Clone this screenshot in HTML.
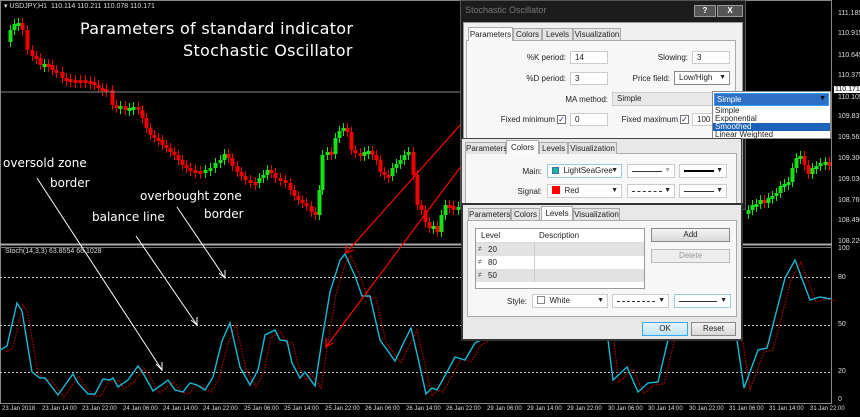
<!DOCTYPE html>
<html><head><meta charset="utf-8"><style>
*{margin:0;padding:0;box-sizing:border-box}
body{width:860px;height:417px;background:#000;position:relative;overflow:hidden;font-family:"Liberation Sans",sans-serif}
.a{position:absolute}
.ax{position:absolute;left:838px;font-size:7px;color:#ddd}
.tl{position:absolute;top:406px;font-size:6px;color:#ddd;white-space:nowrap}
.dlg{position:absolute;background:#1c1c1c;border:1px solid #555}
.body{position:absolute;background:#f0f0f0;border:1px solid #999}
.tab{position:absolute;font-size:8px;color:#222;background:#e4e4e4;border:1px solid #aaa;border-bottom:none;text-align:center;line-height:11px;height:12px}
.tab.s{background:#fafafa;height:14px;line-height:13px;z-index:2}
.pan{position:absolute;border:1px solid #aaa;background:#f7f7f7}
.lb{position:absolute;font-size:8px;color:#222;text-align:right;white-space:nowrap}
.in{position:absolute;background:#fff;border:1px solid #ccc;font-size:8px;color:#222;padding-left:4px;line-height:11px;white-space:nowrap;overflow:hidden}
.ar{position:absolute;right:3px;top:0;font-size:7px}
.btn{position:absolute;background:linear-gradient(#f4f4f4,#d8d8d8);border:1px solid #888;font-size:8px;text-align:center;line-height:12px;color:#222}
.cb{position:absolute;width:9px;height:9px;border:1px solid #777;background:#fff;font-size:8px;line-height:8px;text-align:center;color:#225}
.hand{position:absolute;color:#fff;font-family:"DejaVu Sans","Liberation Sans",sans-serif;white-space:nowrap}
</style></head><body>
<svg class="a" style="left:0;top:0" width="860" height="417">
<g id="candles"></g>
<line x1="0" y1="92" x2="832" y2="92" stroke="#888" stroke-width="1"/>
<rect x="0.5" y="0.5" width="831" height="403" fill="none" stroke="#888"/>
<line x1="0" y1="244.5" x2="832" y2="244.5" stroke="#aaa" stroke-width="2"/>
<line x1="0" y1="247.5" x2="832" y2="247.5" stroke="#777"/>
<g stroke="#ccc" stroke-dasharray="2,2" stroke-width="1">
<line x1="0" y1="277.5" x2="832" y2="277.5"/><line x1="0" y1="325.5" x2="832" y2="325.5"/><line x1="0" y1="372.5" x2="832" y2="372.5"/></g>
<path id="red" fill="none" stroke="#b00000" stroke-width="1.3" stroke-dasharray="1.5,1.5" transform="translate(6,2)"/>
<path id="blue" fill="none" stroke="#1ab8d8" stroke-width="1.4"/>
<g stroke="#fff" stroke-width="1">
<line x1="37" y1="178" x2="162" y2="370"/><path d="M156 364 L162 370 L162 362" fill="none"/>
<line x1="136" y1="236" x2="197" y2="325"/><path d="M191 320 L197 325 L197 317" fill="none"/>
<line x1="177" y1="207" x2="225" y2="278"/><path d="M219 273 L225 278 L225 270" fill="none"/>
</g>
<g stroke="#f00" stroke-width="1.2">
<line x1="520" y1="58" x2="346" y2="253"/><path d="M346 245 L346 253 L354 250" fill="none"/>
<line x1="527" y1="78" x2="326" y2="347"/><path d="M326 338 L326 347 L333 343" fill="none"/>
</g>
</svg>
<div class="a" style="left:4px;top:2px;font-size:7px;color:#ddd">▾ USDJPY,H1 &nbsp;110.114 110.211 110.078 110.171</div>
<div class="a" style="left:5px;top:248px;font-size:7px;color:#ddd">Stoch(14,3,3) 63.8554 66.1028</div>
<div class="hand" style="left:80px;top:19px;font-size:16px;letter-spacing:0.3px">Parameters of standard indicator</div>
<div class="hand" style="left:183px;top:41px;font-size:16px;letter-spacing:0.3px">Stochastic Oscillator</div>
<div class="hand" style="left:3px;top:156px;font-size:12px">oversold zone</div>
<div class="hand" style="left:50px;top:176px;font-size:12px">border</div>
<div class="hand" style="left:140px;top:189px;font-size:12px">overbought zone</div>
<div class="hand" style="left:204px;top:207px;font-size:12px">border</div>
<div class="hand" style="left:92px;top:210px;font-size:12px">balance line</div>
<div class="ax" style="top:10px">111.185</div><div class="ax" style="top:30px">110.915</div><div class="ax" style="top:52px">110.645</div><div class="ax" style="top:72px">110.375</div>
<div class="ax" style="top:86px;left:834px;background:#fff;color:#000;padding:0 1px">110.171</div>
<div class="ax" style="top:94px">110.105</div><div class="ax" style="top:113px">109.835</div><div class="ax" style="top:134px">109.565</div><div class="ax" style="top:155px">109.300</div><div class="ax" style="top:176px">109.030</div><div class="ax" style="top:197px">108.760</div><div class="ax" style="top:217px">108.490</div><div class="ax" style="top:238px">108.220</div>
<div class="ax" style="top:245px">100</div><div class="ax" style="top:274px">80</div><div class="ax" style="top:321px">50</div><div class="ax" style="top:368px">20</div><div class="ax" style="top:396px">0</div>
<div class="tl" style="left:2px">23 Jan 2018</div><div class="tl" style="left:42px">23 Jan 14:00</div><div class="tl" style="left:82px">23 Jan 22:00</div><div class="tl" style="left:123px">24 Jan 06:00</div><div class="tl" style="left:163px">24 Jan 14:00</div><div class="tl" style="left:203px">24 Jan 22:00</div><div class="tl" style="left:244px">25 Jan 06:00</div><div class="tl" style="left:284px">25 Jan 14:00</div><div class="tl" style="left:325px">25 Jan 22:00</div><div class="tl" style="left:365px">26 Jan 06:00</div><div class="tl" style="left:406px">26 Jan 14:00</div><div class="tl" style="left:446px">26 Jan 22:00</div><div class="tl" style="left:487px">29 Jan 06:00</div><div class="tl" style="left:527px">29 Jan 14:00</div><div class="tl" style="left:567px">29 Jan 22:00</div><div class="tl" style="left:608px">30 Jan 06:00</div><div class="tl" style="left:648px">30 Jan 14:00</div><div class="tl" style="left:689px">30 Jan 22:00</div><div class="tl" style="left:729px">31 Jan 06:00</div><div class="tl" style="left:769px">31 Jan 14:00</div><div class="tl" style="left:810px">31 Jan 22:00</div>

<!-- dialog 1 -->
<div class="dlg" style="left:460px;top:0;width:286px;height:210px">
 <div class="a" style="left:4px;top:4px;font-size:9px;color:#777">Stochastic Oscillator</div>
 <div class="a" style="left:233px;top:4px;width:22px;height:12px;background:#555;border:1px solid #999;color:#fff;font-size:8px;text-align:center;line-height:10px;font-weight:bold">?</div>
 <div class="a" style="left:256px;top:4px;width:26px;height:12px;background:#555;border:1px solid #999;color:#fff;font-size:8px;text-align:center;line-height:10px;font-weight:bold">X</div>
 <div class="body" style="left:2px;top:21px;width:280px;height:186px"></div>
</div>
<div class="pan" style="left:466px;top:40px;width:270px;height:100px"></div>
<div class="tab s" style="left:468px;top:27px;width:45px">Parameters</div>
<div class="tab" style="left:513px;top:28px;width:29px">Colors</div>
<div class="tab" style="left:542px;top:28px;width:31px">Levels</div>
<div class="tab" style="left:573px;top:28px;width:48px">Visualization</div>
<div class="lb" style="left:500px;top:53px;width:66px">%K period:</div>
<div class="in" style="left:570px;top:51px;width:38px;height:13px">14</div>
<div class="lb" style="left:620px;top:53px;width:68px">Slowing:</div>
<div class="in" style="left:692px;top:51px;width:38px;height:13px">3</div>
<div class="lb" style="left:500px;top:74px;width:66px">%D period:</div>
<div class="in" style="left:570px;top:72px;width:38px;height:13px">3</div>
<div class="lb" style="left:600px;top:74px;width:70px">Price field:</div>
<div class="in" style="left:674px;top:71px;width:56px;height:14px;border-color:#888">Low/High<span class="ar">▼</span></div>
<div class="lb" style="left:540px;top:95px;width:68px">MA method:</div>
<div class="in" style="left:612px;top:92px;width:101px;height:14px;background:#e8e8e8">Simple</div>
<div class="lb" style="left:480px;top:115px;width:75px">Fixed minimum</div>
<div class="cb" style="left:557px;top:115px">✓</div>
<div class="in" style="left:570px;top:113px;width:38px;height:13px">0</div>
<div class="lb" style="left:600px;top:115px;width:78px">Fixed maximum</div>
<div class="cb" style="left:680px;top:115px">✓</div>
<div class="in" style="left:692px;top:113px;width:22px;height:13px">100</div>
<div class="a" style="left:712px;top:91px;width:119px;height:48px;background:#fff;border:1px solid #888;font-size:8px;color:#222">
 <div style="height:13px;margin:1px;border:1px solid #39f;background:#2d6fc6;color:#fff;padding-left:2px;line-height:11px">Simple<span style="position:absolute;right:4px;top:1px;color:#000;font-size:7px">▼</span></div>
 <div style="padding-left:2px;line-height:8px">Simple</div>
 <div style="padding-left:2px;line-height:8px">Exponential</div>
 <div style="padding-left:2px;line-height:8px;background:#1c62b9;color:#fff">Smoothed</div>
 <div style="padding-left:2px;line-height:8px">Linear Weighted</div>
</div>

<!-- dialog 2 -->
<div class="a" style="left:461px;top:138px;width:281px;height:70px;background:#e8e8e8;border:1px solid #444"></div>
<div class="pan" style="left:465px;top:153px;width:272px;height:55px"></div>
<div class="tab" style="left:465px;top:142px;width:41px">Parameters</div>
<div class="tab s" style="left:506px;top:140px;width:33px">Colors</div>
<div class="tab" style="left:539px;top:142px;width:29px">Levels</div>
<div class="tab" style="left:568px;top:142px;width:49px">Visualization</div>
<div class="lb" style="left:500px;top:167px;width:42px">Main:</div>
<div class="in" style="left:547px;top:164px;width:75px;height:14px;border-color:#9cd"><span style="display:inline-block;width:7px;height:7px;background:#20b2aa;border:1px solid #37a;vertical-align:-1px"></span> &nbsp;LightSeaGree<span class="ar">▼</span></div>
<div class="in" style="left:627px;top:164px;width:48px;height:14px"><span style="position:absolute;left:4px;top:6px;width:30px;border-top:1px solid #333"></span><span class="ar" style="color:#aaa">▼</span></div>
<div class="in" style="left:679px;top:164px;width:48px;height:14px"><span style="position:absolute;left:4px;top:5px;width:30px;border-top:2px solid #000"></span><span class="ar">▼</span></div>
<div class="lb" style="left:500px;top:187px;width:42px">Signal:</div>
<div class="in" style="left:547px;top:184px;width:75px;height:14px"><span style="display:inline-block;width:8px;height:8px;background:#f00;vertical-align:-1px"></span> &nbsp;Red<span class="ar">▼</span></div>
<div class="in" style="left:627px;top:184px;width:48px;height:14px"><span style="position:absolute;left:4px;top:6px;width:30px;border-top:1px dashed #333"></span><span class="ar">▼</span></div>
<div class="in" style="left:679px;top:184px;width:48px;height:14px"><span style="position:absolute;left:4px;top:6px;width:30px;border-top:1px solid #333"></span><span class="ar">▼</span></div>

<!-- dialog 3 -->
<div class="a" style="left:461px;top:203px;width:282px;height:138px;background:#e8e8e8;border:2px solid #333"></div>
<div class="pan" style="left:467px;top:220px;width:270px;height:97px"></div>
<div class="tab" style="left:468px;top:208px;width:43px">Parameters</div>
<div class="tab" style="left:511px;top:208px;width:29px">Colors</div>
<div class="tab s" style="left:541px;top:206px;width:32px">Levels</div>
<div class="tab" style="left:573px;top:208px;width:47px">Visualization</div>
<div class="a" style="left:475px;top:228px;width:170px;height:61px;background:#fff;border:1px solid #999;font-size:8px;color:#222">
 <div style="height:14px;line-height:14px;border-bottom:1px solid #ddd"><span style="position:absolute;left:5px">Level</span><span style="position:absolute;left:63px">Description</span></div>
 <div style="height:13px;line-height:13px;background:#e2e2e2;position:relative"><span style="position:absolute;left:2px;color:#446;font-size:7px">≠</span><span style="position:absolute;left:12px">20</span></div>
 <div style="height:13px;line-height:13px;position:relative"><span style="position:absolute;left:2px;color:#446;font-size:7px">≠</span><span style="position:absolute;left:12px">80</span></div>
 <div style="height:13px;line-height:13px;background:#e2e2e2;position:relative"><span style="position:absolute;left:2px;color:#446;font-size:7px">≠</span><span style="position:absolute;left:12px">50</span></div>
 <div style="position:absolute;left:58px;top:14px;width:1px;height:39px;background:#ccc"></div>
</div>
<div class="btn" style="left:651px;top:228px;width:79px;height:14px">Add</div>
<div class="btn" style="left:651px;top:249px;width:79px;height:14px;color:#999;border-color:#bbb;background:#eee">Delete</div>
<div class="lb" style="left:490px;top:297px;width:37px">Style:</div>
<div class="in" style="left:532px;top:294px;width:76px;height:14px"><span style="display:inline-block;width:8px;height:8px;border:1px solid #888;vertical-align:-1px"></span> &nbsp;White<span class="ar">▼</span></div>
<div class="in" style="left:612px;top:294px;width:57px;height:14px"><span style="position:absolute;left:4px;top:6px;width:38px;border-top:1px dashed #333"></span><span class="ar">▼</span></div>
<div class="in" style="left:674px;top:294px;width:57px;height:14px;border-color:#9cd"><span style="position:absolute;left:4px;top:6px;width:38px;border-top:1px solid #333"></span><span class="ar">▼</span></div>
<div class="btn" style="left:642px;top:322px;width:46px;height:14px;border:1px solid #3af;background:linear-gradient(#eaf6fd,#bfe3f8)">OK</div>
<div class="btn" style="left:691px;top:322px;width:45px;height:14px">Reset</div>

<script>
var pts=[[5,42],[10,30],[14,24],[18,23],[22,30],[27,50],[32,56],[36,58],[40,65],[44,64],[48,65],[52,70],[56,72],[62,78],[66,79],[70,80],[75,80],[80,80],[85,81],[90,82],[94,85],[98,88],[102,89],[106,90],[112,105],[116,108],[120,106],[125,110],[129,108],[133,107],[138,110],[142,118],[146,128],[150,135],[154,138],[158,140],[162,145],[166,148],[170,152],[174,155],[178,160],[182,165],[186,168],[190,170],[195,171],[200,172],[205,170],[210,168],[215,163],[220,160],[224,154],[228,158],[232,166],[237,172],[241,176],[245,180],[250,182],[255,183],[259,178],[263,175],[267,170],[271,173],[275,178],[280,180],[285,183],[290,190],[294,196],[298,200],[302,203],[306,206],[311,212],[315,215],[319,190],[322,155],[327,152],[331,154],[335,138],[339,131],[343,128],[347,132],[351,150],[355,153],[360,156],[364,152],[368,151],[372,155],[376,160],[380,172],[384,175],[388,176],[392,168],[396,164],[400,160],[404,155],[408,152],[413,175],[417,205],[421,210],[425,222],[429,228],[433,226],[437,232],[441,215],[445,205],[449,206],[453,210],[458,207],
[748,210],[752,205],[756,204],[760,200],[764,203],[768,198],[772,196],[776,193],[780,186],[784,184],[788,182],[792,168],[796,158],[800,156],[804,165],[808,174],[812,168],[816,166],[820,163],[825,162],[829,166]];
var g=document.getElementById('candles'),h='';
for(var i=1;i<pts.length;i++){var x=pts[i][0],o=pts[i-1][1],c=pts[i][1];if(x-pts[i-1][0]>20)o=c+4;
var up=c<o,col=up?'#16e016':'#ee0000',t=Math.min(o,c),b=Math.max(o,c);if(b-t<3)b=t+3;
h+='<line x1="'+(x+0.5)+'" y1="'+(t-5)+'" x2="'+(x+0.5)+'" y2="'+(b+5)+'" stroke="'+col+'" stroke-width="1"/>';
h+='<rect x="'+(x-1.5)+'" y="'+t+'" width="4" height="'+(b-t)+'" fill="'+col+'"/>';}
g.innerHTML=h;
var bl=[[0,350],[7,346],[17,303],[22,311],[32,372],[40,378],[45,378],[58,395],[70,378],[73,374],[78,383],[88,394],[95,394],[103,379],[110,380],[113,378],[118,387],[128,380],[138,366],[143,373],[153,391],[160,386],[168,380],[175,390],[183,392],[190,383],[197,385],[205,390],[213,377],[222,341],[230,323],[240,367],[250,385],[258,370],[265,335],[275,330],[280,340],[287,341],[292,363],[300,378],[305,372],[315,386],[322,340],[330,292],[340,260],[345,254],[355,276],[362,296],[370,296],[380,340],[395,361],[405,340],[411,328],[418,358],[426,394],[432,388],[437,390],[447,372],[455,357],[465,360],[475,343],[500,330],[600,320],[608,340],[613,380],[627,367],[638,392],[648,383],[658,382],[668,340],[700,320],[737,340],[744,388],[758,350],[767,348],[785,278],[795,260],[810,300],[820,297],[831,299]];
var d='M'+bl.map(function(p){return p.join(' ')}).join(' L');
document.getElementById('blue').setAttribute('d',d);document.getElementById('red').setAttribute('d',d);
</script>
</body></html>
